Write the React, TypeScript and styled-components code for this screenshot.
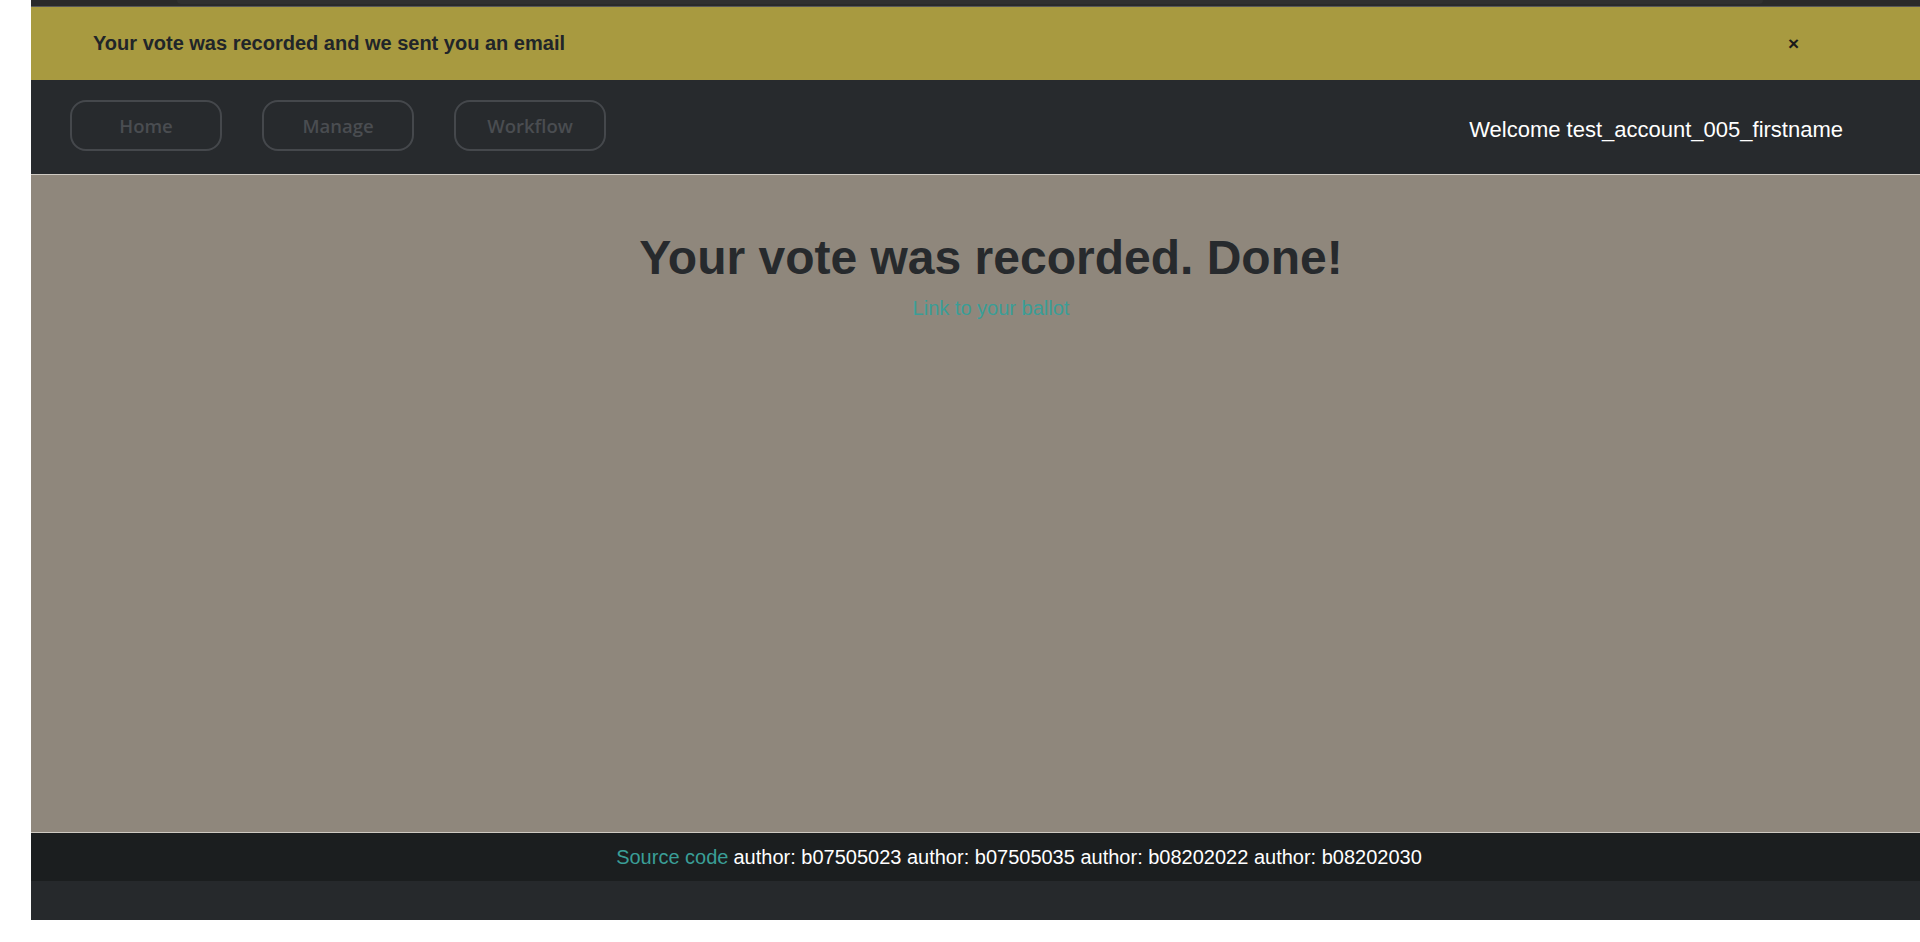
import styled, { createGlobalStyle } from 'styled-components';

const GlobalStyle = createGlobalStyle`
  body {
    margin: 0;
    background: #ffffff;
    overflow: hidden;
    font-family: "Liberation Sans", Arial, sans-serif;
  }
`;

export const Page = styled.div`
  width: 1920px;
  margin-left: 31px;
  display: flex;
  flex-direction: column;
`;

export const TopStrip = styled.div`
  height: 6px;
  background: #2a2a2a;
  border-bottom: 1px solid #575757;
  padding: 0 188px 0 146px;

  .inner {
    height: 4px;
    background: #303030;
    border-radius: 0 0 4px 4px;
  }
`;

export const Alert = styled.div`
  height: 73px;
  background: #a89a40;
  display: flex;
  align-items: center;
  justify-content: space-between;
  padding: 0 152px 0 62px;
  color: #212529;
  font-weight: 700;
  font-size: 20px;
`;

export const CloseButton = styled.button`
  border: none;
  background: transparent;
  padding: 0;
  color: #1a1a1a;
  font-family: "Liberation Sans", Arial, sans-serif;
  font-weight: 700;
  font-size: 19px;
  line-height: 1;
  cursor: pointer;
`;

export const Navbar = styled.nav`
  height: 95px;
  box-sizing: border-box;
  background: #272a2d;
  border-bottom: 1px solid #cfcac2;
  display: flex;
  align-items: center;
  justify-content: space-between;
  padding: 0 108px 0 39px;
`;

export const NavLinks = styled.div`
  display: flex;
  gap: 40px;
  margin-bottom: 4px;
`;

export const NavButton = styled.button`
  width: 152px;
  height: 51px;
  border: 2px solid #45484c;
  border-radius: 16px;
  background: transparent;
  color: #4a4d51;
  font-family: "Open Sans", Lato, sans-serif;
  font-weight: 600;
  font-size: 18.5px;
  cursor: pointer;
`;

export const Welcome = styled.span`
  color: #ffffff;
  font-size: 22px;
  margin-top: 5px;
`;

export const Main = styled.main`
  height: 658px;
  background: #8f877c;
  border-bottom: 1px solid #cfcac2;
  display: flex;
  flex-direction: column;
  align-items: center;
  padding-top: 55px;
  box-sizing: border-box;
`;

export const Title = styled.h1`
  margin: 0;
  font-size: 48px;
  font-weight: 700;
  color: #272a2d;
  line-height: 55px;
`;

export const BallotLink = styled.a`
  margin-top: 12px;
  font-size: 20px;
  line-height: 23px;
  color: #3a9e97;
  text-decoration: none;
`;

export const Footer = styled.footer`
  height: 48px;
  background: #1b1e1f;
  display: flex;
  align-items: center;
  justify-content: center;
  padding-left: 56px;
  color: #ffffff;
  font-size: 20px;

  a {
    color: #3a9e97;
    text-decoration: none;
    margin-right: 5px;
  }
`;

export const BottomBar = styled.div`
  height: 39px;
  background: #26292c;
`;

function App() {
  const links = ['Home', 'Manage', 'Workflow'];
  const authors = ['b07505023', 'b07505035', 'b08202022', 'b08202030'];

  return (
    <>
      <GlobalStyle />
      <Page>
        <TopStrip>
          <div className="inner" />
        </TopStrip>
        <Alert>
          <span>Your vote was recorded and we sent you an email</span>
          <CloseButton aria-label="Close">×</CloseButton>
        </Alert>
        <Navbar>
          <NavLinks>
            {links.map((label) => (
              <NavButton key={label}>{label}</NavButton>
            ))}
          </NavLinks>
          <Welcome>Welcome test_account_005_firstname</Welcome>
        </Navbar>
        <Main>
          <Title>Your vote was recorded. Done!</Title>
          <BallotLink href="#">Link to your ballot</BallotLink>
        </Main>
        <Footer>
          <a href="#">Source code</a>
          {authors.map((a) => `author: ${a}`).join(' ')}
        </Footer>
        <BottomBar />
      </Page>
    </>
  );
}

export default App;
